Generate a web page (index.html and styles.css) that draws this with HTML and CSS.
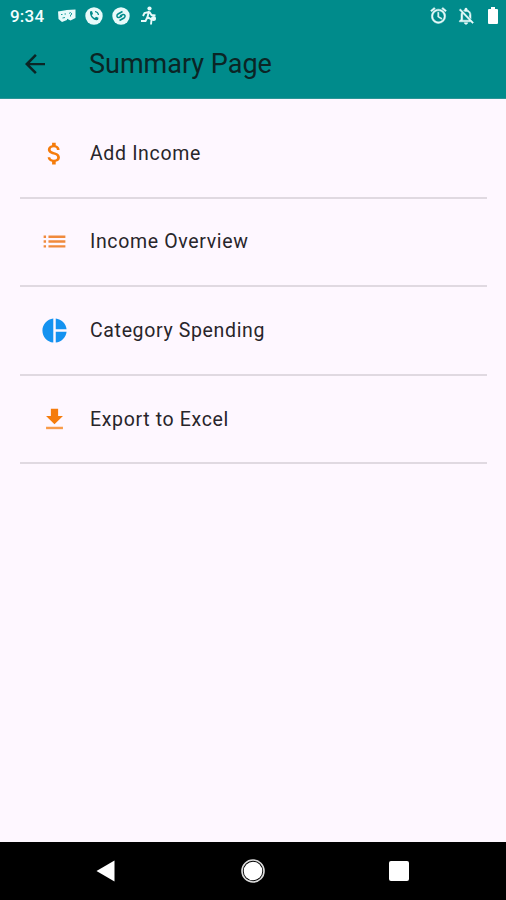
FILE: index.html
```html
<!DOCTYPE html>
<html lang="en">
<head>
  <meta charset="UTF-8">
  <meta name="viewport" content="width=device-width, initial-scale=1.0">
  <title>Summary Page</title>
  <link rel="stylesheet" href="styles.css">
</head>
<body>
  <header class="top">
    <div class="status-bar">
      <span class="clock">9:34</span>
      <div class="notifications">
        <svg width="18" height="18" viewBox="0 0 18 18" fill="#e8fafa">
          <path d="M0 4.500l9-1.500v10l-5 2-3.500-3z"/>
          <path d="M8.500 3l9-.5V11l-5 2.500-4-2z"/>
          <path d="M3 7.500h1.500M6.500 7H8M4.500 11l2.500-.5M11 6.500l1.500-1L14 7l-1.500 1v1.500" fill="none" stroke="#1b9c9c" stroke-width="1"/>
        </svg>
        <svg width="18" height="18" viewBox="0 0 18 18">
          <circle cx="9" cy="9" r="8.700" fill="#e8fafa"/>
          <path d="M5 4.500l2-.5 1 3-1.200 1c.6 1.500 1.500 2.400 3 3l1.200-1.200 2.500 1-.5 2.200C8.500 14 4.500 9.500 5 4.500z" fill="#008b8b"/>
          <path d="M10 4.500c2 .2 3.300 1.500 3.500 3.500" fill="none" stroke="#008b8b" stroke-width="1.200"/>
        </svg>
        <svg width="18" height="18" viewBox="0 0 18 18">
          <circle cx="9" cy="9" r="8.700" fill="#e8fafa"/>
          <path d="M10.500 4.500L6 7c-2 1.300-1 4 1 3.500l3-1.500M7.500 13.500L12 11c2-1.300 1-4-1-3.500L8 9" fill="none" stroke="#008b8b" stroke-width="1.500"/>
        </svg>
        <svg width="20" height="20" viewBox="0 0 18 20">
          <circle cx="9.500" cy="2.500" r="2.100" fill="#e8fafa"/>
          <path d="M9 5L7.500 11l4 2.500-.5 5M7.500 11l-2 4H1M9 6L4.500 7 3 10M9.500 6l2 3 4 .5" fill="none" stroke="#e8fafa" stroke-width="1.900"/>
          <circle cx="13.500" cy="12.500" r="2.500" fill="#e8fafa"/>
        </svg>
      </div>
      <div class="system-icons">
        <svg width="19" height="19" viewBox="0 0 24 24" fill="#e8fafa" stroke="#e8fafa" stroke-width=".6">
          <path d="M22 5.720l-4.600-3.860-1.290 1.530 4.600 3.860L22 5.720zM7.880 3.390L6.600 1.860 2 5.710l1.290 1.530 4.590-3.850zM12.500 8H11v6l4.750 2.850.75-1.230-4-2.370V8zM12 4c-4.970 0-9 4.030-9 9s4.020 9 9 9a9 9 0 0 0 0-18zm0 16c-3.870 0-7-3.130-7-7s3.130-7 7-7 7 3.130 7 7-3.130 7-7 7z"/>
        </svg>
        <svg width="20" height="20" viewBox="0 0 24 24" fill="#e8fafa" stroke="#e8fafa" stroke-width=".6">
          <path d="M20 18.690L7.840 6.140 5.270 3.490 4 4.760l2.800 2.800v.01c-.52.99-.8 2.160-.8 3.420v5l-2 2v1h13.730l2 2L21 19.720l-1-1.030zM8 17v-6c0-.7.100-1.300.3-1.900L16 17H8zM12 22c1.110 0 2-.89 2-2h-4c0 1.110.89 2 2 2zM16 11v2.300l2 2V11c0-3.080-1.640-5.640-4.500-6.320V4c0-.83-.67-1.500-1.500-1.500s-1.500.67-1.500 1.500v.68c-.5.120-1 .3-1.400.52l1.500 1.500c.6-.2 1.200-.3 1.900-.2 2.480 0 4 2.020 4 4.500z"/>
        </svg>
        <svg class="battery" width="10" height="18" viewBox="0 0 10 18" fill="#fff">
          <path d="M3 0h4v2h2a1 1 0 0 1 1 1v13a1 1 0 0 1-1 1H1a1 1 0 0 1-1-1V3a1 1 0 0 1 1-1h2z"/>
        </svg>
      </div>
    </div>
    <div class="app-bar">
      <svg width="30" height="30" viewBox="0 0 24 24" fill="#0b2525">
        <path d="M20 11.100H7.830l5.590-5.690L12 4l-8 8 8 8 1.410-1.410-5.580-5.690H20z"/>
      </svg>
      <h1>Summary Page</h1>
    </div>
  </header>

  <main class="menu">
    <div class="menu-item">
      <svg class="menu-icon orange" viewBox="0 0 24 24">
        <path d="M11.800 10.900c-2.270-.59-3-1.200-3-2.150 0-1.090 1.010-1.850 2.700-1.850 1.780 0 2.440.85 2.500 2.100h2.210c-.07-1.720-1.120-3.300-3.210-3.810V3h-3v2.160c-1.940.42-3.500 1.680-3.500 3.610 0 2.310 1.910 3.460 4.700 4.130 2.500.6 3 1.480 3 2.410 0 .69-.49 1.790-2.700 1.790-2.060 0-2.870-.92-2.980-2.100h-2.200c.12 2.190 1.760 3.420 3.680 3.830V21h3v-2.150c1.950-.37 3.500-1.500 3.500-3.550 0-2.840-2.430-3.810-4.700-4.400z"/>
      </svg>
      <span>Add Income</span>
    </div>
    <div class="menu-item">
      <svg class="menu-icon list" viewBox="0 0 24 24">
        <path d="M3 13h2v-2H3v2zm0 4h2v-2H3v2zm0-8h2V7H3v2zm4 4h14v-2H7v2zm0 4h14v-2H7v2zM7 7v2h14V7H7z"/>
      </svg>
      <span>Income Overview</span>
    </div>
    <div class="menu-item">
      <svg class="menu-icon blue" viewBox="0 0 24 24">
        <path d="M11 2v20c-5.070-.5-9-4.790-9-10s3.930-9.500 9-10zm2.030 0v8.990H22c-.47-4.740-4.240-8.520-8.970-8.990zm0 11.010V22c4.740-.47 8.500-4.250 8.970-8.990h-8.970z"/>
      </svg>
      <span>Category Spending</span>
    </div>
    <div class="menu-item">
      <svg class="menu-icon orange" viewBox="0 0 24 24">
        <path d="M19 9h-4V3H9v6H5l7 7 7-7z"/>
        <path d="M5 18v2h14v-2H5z" opacity=".75"/>
      </svg>
      <span>Export to Excel</span>
    </div>
  </main>

  <nav class="nav-bar">
    <svg width="20" height="22" viewBox="0 0 20 22" fill="#fff"><path d="M.5 11L18.500.5v21z"/></svg>
    <svg width="24" height="24" viewBox="0 0 24 24">
      <circle cx="12" cy="12" r="11" fill="none" stroke="#ddd" stroke-width="1.600"/>
      <circle cx="12" cy="12" r="9.300" fill="#fff"/>
    </svg>
    <svg width="20" height="20" viewBox="0 0 20 20" fill="#fff"><rect width="20" height="20" rx="2"/></svg>
  </nav>
</body>
</html>
```

FILE: styles.css
```css
body {
  font-family: Roboto, "Liberation Sans", sans-serif;
  background: #fef7ff;
  display: flex;
  flex-direction: column;
  height: 900px;
  margin: 0;
}
svg {
  display: block;
  flex-shrink: 0;
}
.top {
  box-sizing: border-box;
  height: 99px;
  background: #008b8b;
  border-bottom: 1px solid #2b9596;
}
.status-bar {
  display: flex;
  align-items: center;
  height: 31px;
  padding: 0 8px 0 10px;
}
.clock {
  width: 48px;
  color: #f2ffff;
  font-size: 17px;
  font-weight: 500;
  letter-spacing: 0.2px;
}
.notifications {
  display: flex;
  align-items: center;
  gap: 9px;
}
.system-icons {
  display: flex;
  align-items: center;
  gap: 8px;
  margin-left: auto;
}
.battery {
  margin-left: 4px;
}
.app-bar {
  display: flex;
  align-items: center;
  height: 66px;
  padding-left: 20px;
}
.app-bar h1 {
  margin: 0 0 0 39px;
  color: #0b2525;
  font-size: 27px;
  font-weight: 400;
}
.menu {
  flex: 1;
  padding: 11px 19px 0 20px;
}
.menu-item {
  box-sizing: border-box;
  display: flex;
  align-items: center;
  gap: 20px;
  height: 88.600px;
  padding-left: 20px;
  border-bottom: 2px solid #e0d9e1;
  color: #28252a;
  font-size: 19.500px;
  letter-spacing: 0.650px;
}
.menu-icon {
  width: 29px;
  height: 29px;
  margin-right: 1px;
}
.orange {
  fill: #f57c0c;
}
.list {
  fill: #f08a3c;
}
.blue {
  fill: #1592f0;
}
.nav-bar {
  box-sizing: border-box;
  display: flex;
  align-items: center;
  justify-content: space-between;
  height: 58px;
  padding: 0 97px 0 96px;
  background: #000;
}
```
